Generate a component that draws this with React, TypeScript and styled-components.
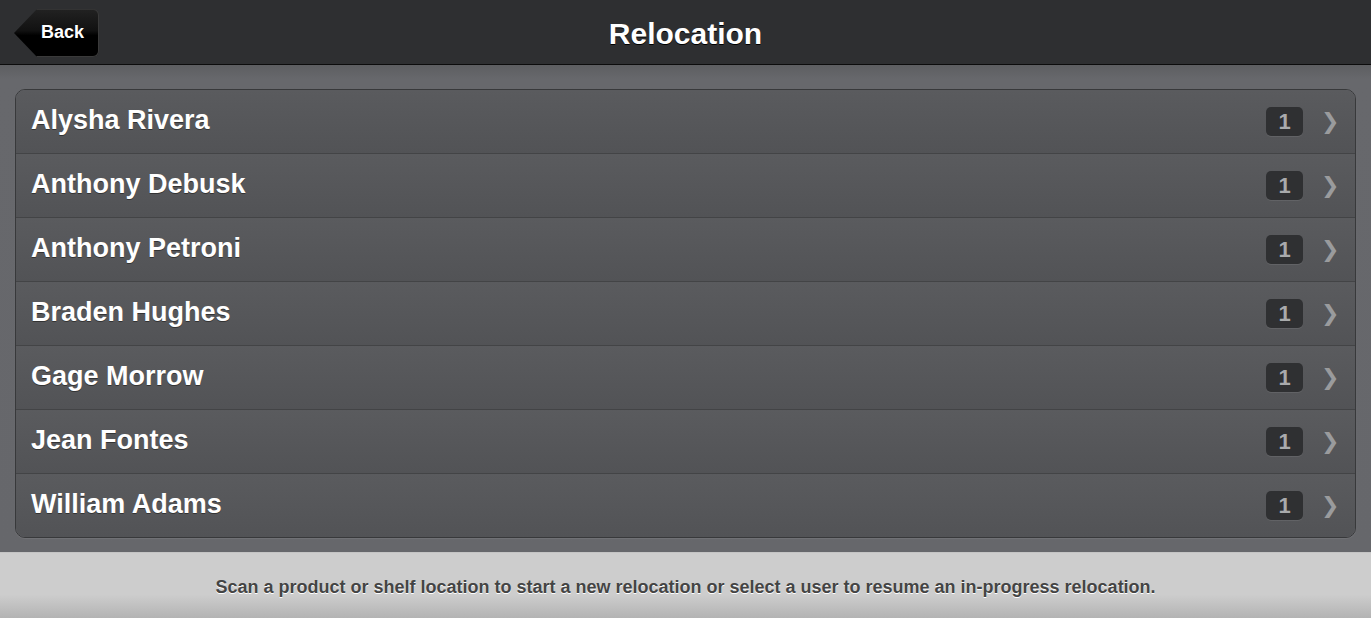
import styled, { createGlobalStyle } from 'styled-components';

const GlobalStyle = createGlobalStyle`
  html, body {
    margin: 0;
    padding: 0;
    height: 100%;
  }
  body {
    font-family: 'Liberation Sans', Arial, sans-serif;
    background: #646569;
    overflow: hidden;
  }
  #root {
    height: 100%;
  }
`;

const Page = styled.div`
  height: 618px;
  display: flex;
  flex-direction: column;
`;

const Header = styled.header`
  height: 64px;
  flex-shrink: 0;
  background: #2e2f31;
  border-bottom: 1px solid #0c0c0c;
  display: flex;
  align-items: center;
  justify-content: center;
  position: relative;
`;

const Title = styled.h1`
  margin: 4px 0 0;
  font-size: 30px;
  font-weight: bold;
  color: #fff;
  text-shadow: 0 1px 0 #000;
`;

const BackButton = styled.button`
  position: absolute;
  left: 14px;
  top: 9px;
  width: 85px;
  height: 48px;
  padding: 0 0 2px 12px;
  border: none;
  border-radius: 0 6px 6px 0;
  background: linear-gradient(#222 0%, #111 45%, #000 55%, #000 100%);
  clip-path: polygon(0 50%, 23px 0, 100% 0, 100% 100%, 23px 100%);
  box-shadow: inset 0 -1px 0 #3a3a3a, inset -1px 0 0 #3a3a3a, inset 0 1px 0 #333;
  color: #fff;
  font-family: 'Liberation Sans', Arial, sans-serif;
  font-size: 18px;
  font-weight: bold;
  cursor: pointer;
  text-shadow: 0 1px 0 #000;
`;

const Content = styled.main`
  flex: 1;
  padding: 24px 15px 14px;
  background: linear-gradient(#5d5e61 0px, #67686c 14px, #66676b 100%);
`;

const List = styled.ul`
  list-style: none;
  margin: 0;
  padding: 0;
  border: 1px solid #38393b;
  border-radius: 10px;
  overflow: hidden;
  box-shadow: 0 1px 1px rgba(255, 255, 255, 0.08);
`;

const Row = styled.li`
  height: 63px;
  display: flex;
  align-items: center;
  padding: 0 20px 0 15px;
  background: linear-gradient(#5a5b5e, #525356);
  & + & {
    border-top: 1px solid #434446;
  }
  cursor: pointer;
`;

const Name = styled.span`
  flex: 1;
  margin-top: -2px;
  font-size: 27px;
  font-weight: bold;
  color: #fff;
  text-shadow: 0 1px 0 #333;
`;

const Count = styled.span`
  width: 37px;
  height: 29px;
  border-radius: 5px;
  background: #2f3032;
  color: #a9aaac;
  font-size: 22px;
  font-weight: bold;
  display: flex;
  align-items: center;
  justify-content: center;
  box-shadow: 0 1px 0 rgba(255, 255, 255, 0.08);
`;

const Chevron = styled.span`
  width: 14px;
  margin-left: 18px;
  color: #9a9b9d;
  font-size: 22px;
  font-family: 'DejaVu Sans', sans-serif;
  font-weight: bold;
  text-align: center;
`;

const Footer = styled.footer`
  height: 66px;
  flex-shrink: 0;
  box-sizing: border-box;
  padding-top: 4px;
  background: linear-gradient(#cdcdcd 0%, #cdcdcd 64%, #b3b3b3 100%);
  border-top: 1px solid #c4c4c4;
  display: flex;
  align-items: center;
  justify-content: center;
`;

const Hint = styled.p`
  margin: 0;
  font-size: 18px;
  font-weight: bold;
  color: #444;
  text-shadow: 0 1px 0 #fff;
`;

const users = [
  { name: 'Alysha Rivera', count: 1 },
  { name: 'Anthony Debusk', count: 1 },
  { name: 'Anthony Petroni', count: 1 },
  { name: 'Braden Hughes', count: 1 },
  { name: 'Gage Morrow', count: 1 },
  { name: 'Jean Fontes', count: 1 },
  { name: 'William Adams', count: 1 },
];

export default function App() {
  return (
    <Page>
      <GlobalStyle />
      <Header>
        <BackButton>Back</BackButton>
        <Title>Relocation</Title>
      </Header>
      <Content>
        <List>
          {users.map((u) => (
            <Row key={u.name}>
              <Name>{u.name}</Name>
              <Count>{u.count}</Count>
              <Chevron>❯</Chevron>
            </Row>
          ))}
        </List>
      </Content>
      <Footer>
        <Hint>
          Scan a product or shelf location to start a new relocation or select a user to resume an in-progress relocation.
        </Hint>
      </Footer>
    </Page>
  );
}
